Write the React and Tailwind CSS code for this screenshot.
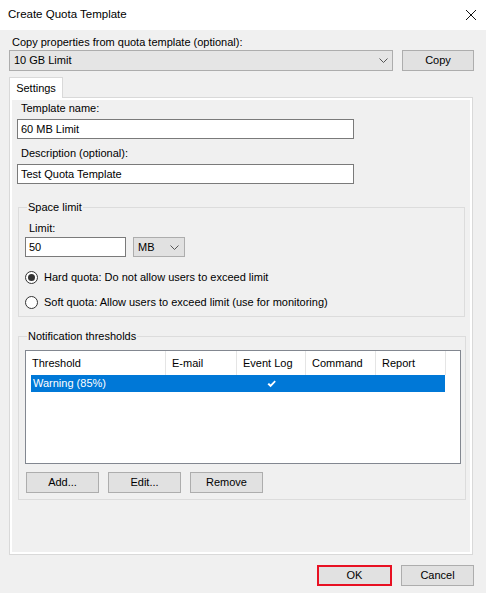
import React from 'react';

const Btn = ({ children, className = '' }) => (
  <button className={`h-[21px] border border-[#adadad] bg-[#e1e1e1] text-[11px] leading-none text-black ${className}`}>
    {children}
  </button>
);

const Chevron = ({ className = '' }) => (
  <svg width="9" height="5" viewBox="0 0 9 5" className={className}>
    <polyline points="0.5,0.5 4.5,4.5 8.5,0.5" fill="none" stroke="#555" strokeWidth="1" />
  </svg>
);

const Input = ({ value, className = '' }) => (
  <div className={`h-[20px] border border-[#7a7a7a] bg-white pl-[3px] flex items-center ${className}`}>
    {value}
  </div>
);

const Radio = ({ checked, label }) => (
  <div className="flex items-center">
    <div className="w-[13px] h-[13px] rounded-full border border-[#333] bg-white flex items-center justify-center">
      {checked && <div className="w-[7px] h-[7px] rounded-full bg-[#333]" />}
    </div>
    <span className="ml-[6px] leading-[13px]">{label}</span>
  </div>
);

const Group = ({ title, className = '', children }) => (
  <div className={`relative border border-[#dcdcdc] ${className}`}>
    <span className="absolute -top-[7px] left-[8px] bg-[#f0f0f0] px-px leading-[13px]">{title}</span>
    {children}
  </div>
);

const columns = [
  { name: 'Threshold', w: 'w-[140px]' },
  { name: 'E-mail', w: 'w-[71px]' },
  { name: 'Event Log', w: 'w-[69px]' },
  { name: 'Command', w: 'w-[70px]' },
  { name: 'Report', w: 'w-[70px]' },
];

export default function App() {
  return (
    <div className="w-[486px] h-[593px] bg-[#f0f0f0] text-[11px] text-black font-['Liberation_Sans',Arial,sans-serif] overflow-hidden">
      {/* title bar */}
      <div className="h-[30px] bg-white flex items-center justify-between pl-[8px] pr-[10px]">
        <span className="text-[11.5px]">Create Quota Template</span>
        <svg width="10" height="10" viewBox="0 0 10 10">
          <path d="M0 0L10 10M10 0L0 10" stroke="#111" strokeWidth="1" />
        </svg>
      </div>

      <div className="px-[9px]">
        <div className="mt-[6px] ml-[3px] leading-[13px]">Copy properties from quota template (optional):</div>
        <div className="mt-px flex gap-[9px]">
          <div className="w-[384px] h-[21px] border border-[#adadad] bg-[#e5e5e5] flex items-center justify-between pl-[4px] pr-[4px]">
            <span>10 GB Limit</span>
            <Chevron />
          </div>
          <Btn className="w-[72px]">Copy</Btn>
        </div>

        {/* tab */}
        <div className="mt-[6px] relative z-10 -mb-px w-[54px] h-[21px] border border-b-0 border-[#d9d9d9] bg-white flex items-center justify-center">
          Settings
        </div>
        <div className="w-[464px] h-[458px] border border-[#d9d9d9] bg-white p-[2px]">
          <div className="h-full bg-[#f0f0f0] px-[5px] pt-[2px]">
            <div className="ml-[4px] leading-[13px]">Template name:</div>
            <Input value="60 MB Limit" className="mt-[4px] w-[337px]" />
            <div className="mt-[8px] ml-[4px] leading-[13px]">Description (optional):</div>
            <Input value="Test Quota Template" className="mt-[4px] w-[337px]" />

            <Group title="Space limit" className="mt-[23px] ml-px w-[447px] h-[110px]">
              <div className="mt-[14px] ml-[10px] leading-[13px]">Limit:</div>
              <div className="mt-[2px] ml-[6px] flex gap-[7px]">
                <Input value="50" className="w-[101px]" />
                <div className="w-[52px] h-[20px] border border-[#adadad] bg-[#e1e1e1] flex items-center justify-between pl-[4px] pr-[5px]">
                  <span>MB</span>
                  <Chevron />
                </div>
              </div>
              <div className="mt-[14px] ml-[6px] flex flex-col gap-[12px]">
                <Radio checked label="Hard quota: Do not allow users to exceed limit" />
                <Radio label="Soft quota: Allow users to exceed limit (use for monitoring)" />
              </div>
            </Group>

            <Group title="Notification thresholds" className="mt-[19px] ml-px w-[448px] h-[164px]">
              <div className="mt-[13px] ml-[6px] w-[436px] h-[114px] border border-[#828790] bg-white">
                <div className="flex h-[24px]">
                  {columns.map((c) => (
                    <div key={c.name} className={`${c.w} h-full border-r border-[#e5e5e5] flex items-center pl-[6px] shrink-0`}>
                      {c.name}
                    </div>
                  ))}
                </div>
                <div className="ml-[5px] w-[414px] h-[17px] bg-[#0078d7] text-white flex items-center">
                  <span className="w-[135px] pl-[2px] shrink-0">Warning (85%)</span>
                  <span className="w-[71px] shrink-0" />
                  <span className="w-[69px] shrink-0 flex justify-center">
                    <svg width="9" height="8" viewBox="0 0 9 8">
                      <path d="M0.5 4.2L2 3L3.6 4.6L7.6 0.6L8.8 1.8L3.6 7.2Z" fill="#fff" />
                    </svg>
                  </span>
                </div>
              </div>
              <div className="mt-[8px] ml-[7px] flex gap-[9px]">
                <Btn className="w-[73px]">Add...</Btn>
                <Btn className="w-[73px]">Edit...</Btn>
                <Btn className="w-[73px]">Remove</Btn>
              </div>
            </Group>
          </div>
        </div>

        <div className="mt-[10px] flex justify-end gap-[9px] pr-[3px]">
          <button className="w-[75px] h-[21px] border-2 border-[#e81123] bg-[#e1e1e1] text-[11px] leading-none">OK</button>
          <Btn className="w-[73px]">Cancel</Btn>
        </div>
      </div>
    </div>
  );
}
